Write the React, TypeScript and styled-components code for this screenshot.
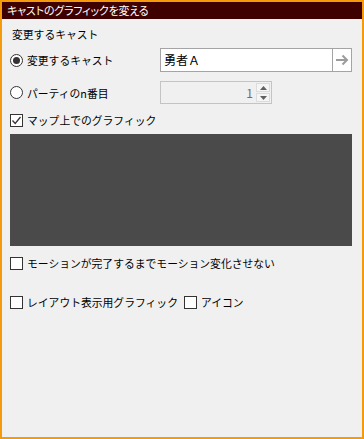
import React from "react";
import styled, { createGlobalStyle } from "styled-components";

const GlobalStyle = createGlobalStyle`
  html, body {
    margin: 0;
    padding: 0;
    background: #f0f0f0;
  }
  * {
    box-sizing: border-box;
  }
`;

const FONT = `"Noto Sans CJK JP", "Noto Sans", sans-serif`;

const Window = styled.div`
  width: 364px;
  height: 439px;
  border: 2px solid #f59a0a;
  background: #f0f0f0;
  display: flex;
  flex-direction: column;
  font-family: ${FONT};
  font-size: 10.8px;
  color: #000;
`;

const TitleBar = styled.div`
  height: 17px;
  background: #3f0000;
  color: #fff;
  font-size: 11px;
  letter-spacing: -0.2px;
  line-height: 17px;
  padding-left: 5px;
  font-feature-settings: "palt";
  white-space: nowrap;
`;

const Body = styled.div`
  display: flex;
  flex-direction: column;
  padding: 0 10px 0 8px;
`;

const GroupLabel = styled.div`
  height: 16px;
  line-height: 16px;
  margin-top: 7px;
  padding-left: 2px;
`;

const Row = styled.div<{ $h: number; $mt: number }>`
  display: flex;
  align-items: center;
  height: ${(p) => p.$h}px;
  margin-top: ${(p) => p.$mt}px;
  white-space: nowrap;
`;

const Choice = styled.label<{ $w?: number }>`
  display: flex;
  align-items: center;
  gap: 4px;
  width: ${(p) => (p.$w ? `${p.$w}px` : "auto")};
  flex-shrink: 0;
`;

const Radio = styled.span<{ $on?: boolean }>`
  width: 13px;
  height: 13px;
  border-radius: 50%;
  border: 1px solid #333;
  background: #fff;
  display: flex;
  align-items: center;
  justify-content: center;
  &::after {
    content: "";
    width: 7px;
    height: 7px;
    border-radius: 50%;
    background: ${(p) => (p.$on ? "#333" : "transparent")};
  }
`;

const Check = styled.span`
  width: 13px;
  height: 13px;
  border: 1px solid #333;
  background: #fff;
  display: flex;
  align-items: center;
  justify-content: center;
`;

const TextBox = styled.div`
  display: flex;
  width: 193px;
  height: 24px;
  border: 1px solid #a4a4a4;
  background: #fff;
`;

const TextValue = styled.div`
  flex: 1;
  padding-left: 3px;
  line-height: 22px;
  font-size: 12px;
`;

const ArrowButton = styled.div`
  width: 19px;
  border-left: 1px solid #a4a4a4;
  display: flex;
  align-items: center;
  justify-content: center;
`;

const SpinBox = styled.div`
  display: flex;
  width: 112px;
  height: 23px;
  border: 1px solid #c4c4c4;
  background: #f0f0f0;
`;

const SpinValue = styled.div`
  flex: 1;
  text-align: right;
  padding-right: 3px;
  line-height: 21px;
  color: #6d6d6d;
  font-size: 12px;
`;

const SpinButtons = styled.div`
  width: 15px;
  display: flex;
  flex-direction: column;
  padding: 1px 1px 1px 0;
  gap: 1px;
`;

const SpinButton = styled.div`
  flex: 1;
  background: #f5f5f5;
  border: 1px solid #dcdcdc;
  display: flex;
  align-items: center;
  justify-content: center;
`;

const Preview = styled.div`
  height: 112px;
  margin-top: 4px;
  background: #4a4a4a;
`;

const Tick = () => (
  <svg width="11" height="11" viewBox="0 0 11 11">
    <path d="M1.5 5.5 L4.2 8.5 L9.5 2" fill="none" stroke="#333" strokeWidth="1.3" />
  </svg>
);

const Tri = ({ up }: { up?: boolean }) => (
  <svg width="7" height="4" viewBox="0 0 7 4">
    <path d={up ? "M0 4 L3.5 0 L7 4 Z" : "M0 0 L3.5 4 L7 0 Z"} fill="#606060" />
  </svg>
);

const App = () => {
  return (
    <>
      <GlobalStyle />
      <Window>
        <TitleBar>キャストのグラフィックを変える</TitleBar>
        <Body>
          <GroupLabel>変更するキャスト</GroupLabel>
          <Row $h={24} $mt={6}>
            <Choice $w={150}>
              <Radio $on />
              変更するキャスト
            </Choice>
            <TextBox>
              <TextValue>勇者Ａ</TextValue>
              <ArrowButton>
                <svg width="14" height="12" viewBox="0 0 14 12">
                  <path
                    d="M1 6 H12 M7.5 1.5 L12 6 L7.5 10.5"
                    fill="none"
                    stroke="#9c9c9c"
                    strokeWidth="2"
                  />
                </svg>
              </ArrowButton>
            </TextBox>
          </Row>
          <Row $h={23} $mt={9}>
            <Choice $w={150}>
              <Radio />
              パーティのn番目
            </Choice>
            <SpinBox>
              <SpinValue>1</SpinValue>
              <SpinButtons>
                <SpinButton>
                  <Tri up />
                </SpinButton>
                <SpinButton>
                  <Tri />
                </SpinButton>
              </SpinButtons>
            </SpinBox>
          </Row>
          <Row $h={20} $mt={6}>
            <Choice>
              <Check>
                <Tick />
              </Check>
              マップ上でのグラフィック
            </Choice>
          </Row>
          <Preview />
          <Row $h={20} $mt={7}>
            <Choice>
              <Check />
              モーションが完了するまでモーション変化させない
            </Choice>
          </Row>
          <Row $h={20} $mt={19}>
            <Choice $w={174}>
              <Check />
              レイアウト表示用グラフィック
            </Choice>
            <Choice>
              <Check />
              アイコン
            </Choice>
          </Row>
        </Body>
      </Window>
    </>
  );
};

export default App;
